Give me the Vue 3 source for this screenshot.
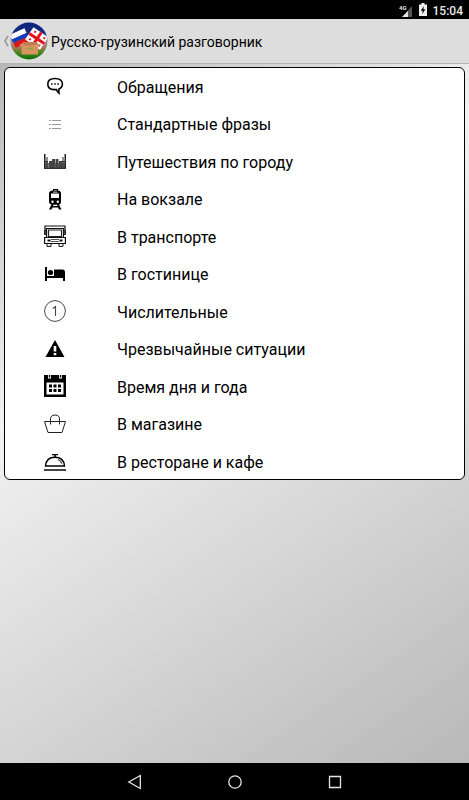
<template>
  <div class="screen">
    <div class="status-bar">
      <svg class="signal" viewBox="0 0 14 14" aria-hidden="true">
        <path d="M13 3v11H3z" fill="#555" />
        <path d="M9 8v6H3z" fill="#e8e8e8" />
        <text x="0" y="7" font-size="6" fill="#e8e8e8">4G</text>
      </svg>
      <svg class="battery" viewBox="0 0 8 13" aria-hidden="true">
        <path d="M2.500 0h3v1.500H8V13H0V1.500h2.500z" fill="#eee" />
        <path d="M4.800 3L1.800 7.700h1.900l-.5 3.500L6.300 6.300H4.400z" fill="#000" />
      </svg>
      <span class="clock">15:04</span>
    </div>

    <header class="header">
      <button class="home" type="button" aria-label="Назад">
        <svg class="chevron" viewBox="0 0 6 12" aria-hidden="true">
          <path d="M5 .8L2 6l3 5.200" fill="none" stroke="#999" stroke-width="1.700" />
        </svg>
        <svg class="logo" viewBox="0 0 38 38" aria-hidden="true">
          <defs>
            <linearGradient id="sky" x1="0" y1="0" x2="0" y2="1">
              <stop offset="0" stop-color="#06237a" />
              <stop offset=".35" stop-color="#1d2f80" />
              <stop offset=".52" stop-color="#a88a98" />
              <stop offset=".68" stop-color="#a07850" />
              <stop offset=".82" stop-color="#3e8a1c" />
              <stop offset="1" stop-color="#056a08" />
            </linearGradient>
            <clipPath id="disc"><circle cx="19" cy="19" r="18.500" /></clipPath>
          </defs>
          <g clip-path="url(#disc)">
            <rect width="38" height="38" fill="url(#sky)" />
            <g transform="rotate(-24 10 16)">
              <rect x="2" y="9" width="16" height="5" fill="#fff" />
              <rect x="2" y="14" width="16" height="4" fill="#0b3fc4" />
              <rect x="2" y="18" width="16" height="5" fill="#e01414" />
            </g>
            <g transform="rotate(34 27 16)">
              <rect x="18" y="9" width="18" height="15" fill="#fff" />
              <path d="M26 9h3v15h-3zM18 15h18v3H18z" fill="#e8121c" />
              <path d="M21 11h2v2h-2zM32 11h2v2h-2zM21 20h2v2h-2zM32 20h2v2h-2z" fill="#e8121c" />
            </g>
            <path d="M13 20l14 0 1.500 3.500H10z" fill="#c07c4a" />
            <path d="M9 23.500l3-2 2 2zM27 23.500l2-2 3 2z" fill="#e0a070" />
            <path d="M11.500 23.500h16.500v9H11.500z" fill="#d8945e" />
            <rect x="17" y="25.500" width="6" height="2" rx="1" fill="#96a04c" />
          </g>
        </svg>
      </button>
      <h1 class="title">Русско-грузинский разговорник</h1>
    </header>

    <main class="content">
      <ul class="topics">
        <li v-for="topic in topics" :key="topic.icon">
          <button class="topic" type="button">
            <svg class="icon" viewBox="0 0 22 22" aria-hidden="true">
              <g v-if="topic.icon === 'speech'">
                <path d="M11 3.500c-4.500 0-7.200 2-7.200 5.500s2.700 5.500 6.200 5.600h2.500c.4 1.500 1.300 2.800 2.500 3.600-.3-1.400-.3-2.800 0-4.300 2.200-.8 3.400-2.500 3.400-4.900 0-3.500-2.900-5.500-7.400-5.500z" fill="none" stroke="#000" stroke-width="1.600" />
                <path d="M7 8.200h1.500v1.500H7zM10.200 8.200h1.500v1.500h-1.500zM13.400 8.200h1.500v1.500h-1.500z" />
              </g>
              <g v-else-if="topic.icon === 'list'" fill="#999">
                <path d="M5 7h2v1H5zM5 11h2v1H5zM5 15h2v1H5zM8 7h9v1H8zM8 11h9v1H8zM8 15h9v1H8z" />
              </g>
              <g v-else-if="topic.icon === 'city'">
                <path d="M0 13h22v6H0z" fill="#777" />
                <path d="M5 11h3v8H5zM8 9h3v10H8zM11.500 9h3v10h-3zM15 11h3v8h-3z" fill="#444" />
                <path d="M0 4h1.500v15H0zM2.500 7h1v12h-1zM18.500 7h1v12h-1zM20.500 4H22v15h-1.500z" fill="#222" />
                <path d="M0 11h4v1.500H0zM18 11h4v1.500h-4zM0 17.800h22V19H0z" fill="#333" />
              </g>
              <g v-else-if="topic.icon === 'train'">
                <path fill-rule="evenodd" d="M9 1h5v1.500c2 .3 3 1.300 3 3v8c0 1.700-.6 2.700-2 3l2.500 5H15l-1-2H8.500l-1 2H5l2.500-5c-1.500-.3-2.500-1.300-2.500-3v-8c0-1.700 1.200-2.700 4-3zM10 2v.6h3V2zM7 5.500v4.500h8V5.500zM9 3.800v.7h4.500v-.7zM8.500 12.500a1.200 1.200 0 100 2.400 1.200 1.200 0 000-2.400zM13.800 12.500a1.200 1.200 0 100 2.400 1.200 1.200 0 000-2.400zM9.500 16.800l-.5 1.200h4.600l-.6-1.200z" />
              </g>
              <g v-else-if="topic.icon === 'bus'">
                <path d="M1 6V1h20v5M2.500 12V3.500h17V12M.6 12.500h20.800v6H.6z" fill="none" stroke="#111" stroke-width="1.200" />
                <path d="M4.500 11.500V5h13v6.500z" fill="none" stroke="#222" stroke-width="1.200" />
                <path d="M3 18.500h4v2.900H3zM15 18.500h4v2.900h-4z" fill="#fff" stroke="#111" />
                <path d="M3.500 14.500h3v2h-3zM15.500 14.500h3v2h-3z" fill="#111" />
                <path d="M7 14.500h8M7 16.500h8" stroke="#555" />
                <path d="M0 5h1.800v5H0zM20.200 5H22v5h-1.800z" fill="#222" />
              </g>
              <g v-else-if="topic.icon === 'bed'">
                <path d="M1 4h2v9h7V6.500h9Q21 6.500 21 9v9h-2v-3H3v3H1z" />
                <circle cx="6.500" cy="9.500" r="2.600" />
              </g>
              <g v-else-if="topic.icon === 'number'">
                <circle cx="11" cy="11" r="10.400" fill="none" stroke="#333" stroke-width=".9" />
                <path d="M8.800 8.500l2.700-2V16" fill="none" stroke="#444" stroke-width="1.100" />
              </g>
              <g v-else-if="topic.icon === 'warning'">
                <path fill-rule="evenodd" d="M11 2l9.500 17h-19zM9.700 8v5.500h2.600V8zM9.700 15v2.300h2.600V15z" />
              </g>
              <g v-else-if="topic.icon === 'calendar'">
                <path fill-rule="evenodd" d="M0 0h4v3.500h3V0h8v3.500h3V0h4v22H0zM2.500 7.500V19.500h17V7.500z" />
                <path d="M4.800 0h1.400v2.500H4.800zM15.800 0h1.400v2.500h-1.400z" />
                <path d="M5 9.500h3v3H5zM9.500 9.500h3v3h-3zM14 9.500h3v3h-3zM5 14h3v3H5zM9.500 14h3v3h-3zM14 14h3v3h-3z" />
              </g>
              <g v-else-if="topic.icon === 'basket'" fill="none" stroke="#222">
                <path d="M.5 8.500h21L18 19.500H4zM6.500 11.500V6c0-2.500 1.500-4 4.500-4s4.500 1.500 4.500 4v5.500" />
              </g>
              <g v-else>
                <path d="M1.500 16C2 10.500 5.500 7.300 11 7.300s9 3.200 9.500 8.700z" fill="none" stroke="#000" stroke-width="1.500" />
                <path d="M8 4h6v1.300H8zM10.200 5h1.600v2.500h-1.600z" />
                <path d="M14 9.500c2 .7 3.200 2 3.800 4" fill="none" stroke="#333" stroke-width="1.300" />
                <path d="M0 19h22v2H0z" fill="#444" />
              </g>
            </svg>
            <span>{{ topic.title }}</span>
          </button>
        </li>
      </ul>
    </main>

    <nav class="nav-bar">
      <button type="button" aria-label="Назад">
        <svg viewBox="0 0 16 16"><path d="M13.300 1.500v13L1.800 8z" /></svg>
      </button>
      <button type="button" aria-label="Домой">
        <svg viewBox="0 0 16 16"><circle cx="8" cy="8" r="6.200" /></svg>
      </button>
      <button type="button" aria-label="Недавние">
        <svg viewBox="0 0 16 16"><path d="M2.500 2.500h11v11h-11z" /></svg>
      </button>
    </nav>
  </div>
</template>

<script setup>
const topics = [
  { icon: "speech", title: "Обращения" },
  { icon: "list", title: "Стандартные фразы" },
  { icon: "city", title: "Путешествия по городу" },
  { icon: "train", title: "На вокзале" },
  { icon: "bus", title: "В транспорте" },
  { icon: "bed", title: "В гостинице" },
  { icon: "number", title: "Числительные" },
  { icon: "warning", title: "Чрезвычайные ситуации" },
  { icon: "calendar", title: "Время дня и года" },
  { icon: "basket", title: "В магазине" },
  { icon: "bell", title: "В ресторане и кафе" },
];
</script>

<style>
body {
  margin: 0;
}
</style>

<style scoped>
.screen {
  min-height: 100vh;
  display: flex;
  flex-direction: column;
  font-family: Roboto, "Noto Sans", sans-serif;
  color: #000;
}

button {
  border: 0;
  padding: 0;
  background: none;
  font: inherit;
  color: inherit;
  cursor: pointer;
}

svg {
  display: block;
}

.status-bar {
  height: 19px;
  padding-right: 6px;
  display: flex;
  align-items: center;
  justify-content: flex-end;
  background: #000;
  color: #e8e8e8;
}

.signal {
  width: 14px;
  height: 14px;
  margin-right: 6px;
  font-weight: 700;
}

.battery {
  width: 8px;
  height: 13px;
  margin-right: 6px;
}

.clock {
  padding-top: 2px;
  font-size: 12px;
  font-weight: 500;
}

.header {
  height: 44px;
  display: flex;
  align-items: center;
  background: #ddd;
  border-bottom: 1px solid #b4b4b4;
}

.home {
  display: flex;
  align-items: center;
  padding-left: 3px;
}

.chevron {
  width: 6px;
  height: 12px;
}

.logo {
  width: 38px;
  height: 38px;
  margin-left: 1px;
}

.title {
  margin: 0 0 0 3px;
  padding-top: 2px;
  font-size: 14px;
  line-height: 20px;
  font-weight: 400;
}

.content {
  flex: 1;
  padding: 3px 4px;
  background: linear-gradient(146deg, #b8b8b8, #f2f2f2 36%, #b8b8b8);
}

.topics {
  min-height: 411px;
  margin: 0;
  padding: 0;
  display: flex;
  flex-direction: column;
  justify-content: space-between;
  list-style: none;
  background: #fff;
  border: 1px solid #000;
  border-radius: 6px;
}

.topic {
  width: 100%;
  height: 36px;
  padding-left: 39px;
  display: flex;
  align-items: center;
  gap: 51px;
  font-size: 16px;
  text-align: left;
}

.topic span {
  padding-top: 2px;
}

.icon {
  flex: none;
  width: 22px;
  height: 22px;
}

.nav-bar {
  height: 37px;
  display: flex;
  align-items: center;
  justify-content: center;
  gap: 84px;
  background: #000;
}

.nav-bar svg {
  width: 16px;
  height: 16px;
  fill: none;
  stroke: #e6e6e6;
  stroke-width: 1.3;
}
</style>
